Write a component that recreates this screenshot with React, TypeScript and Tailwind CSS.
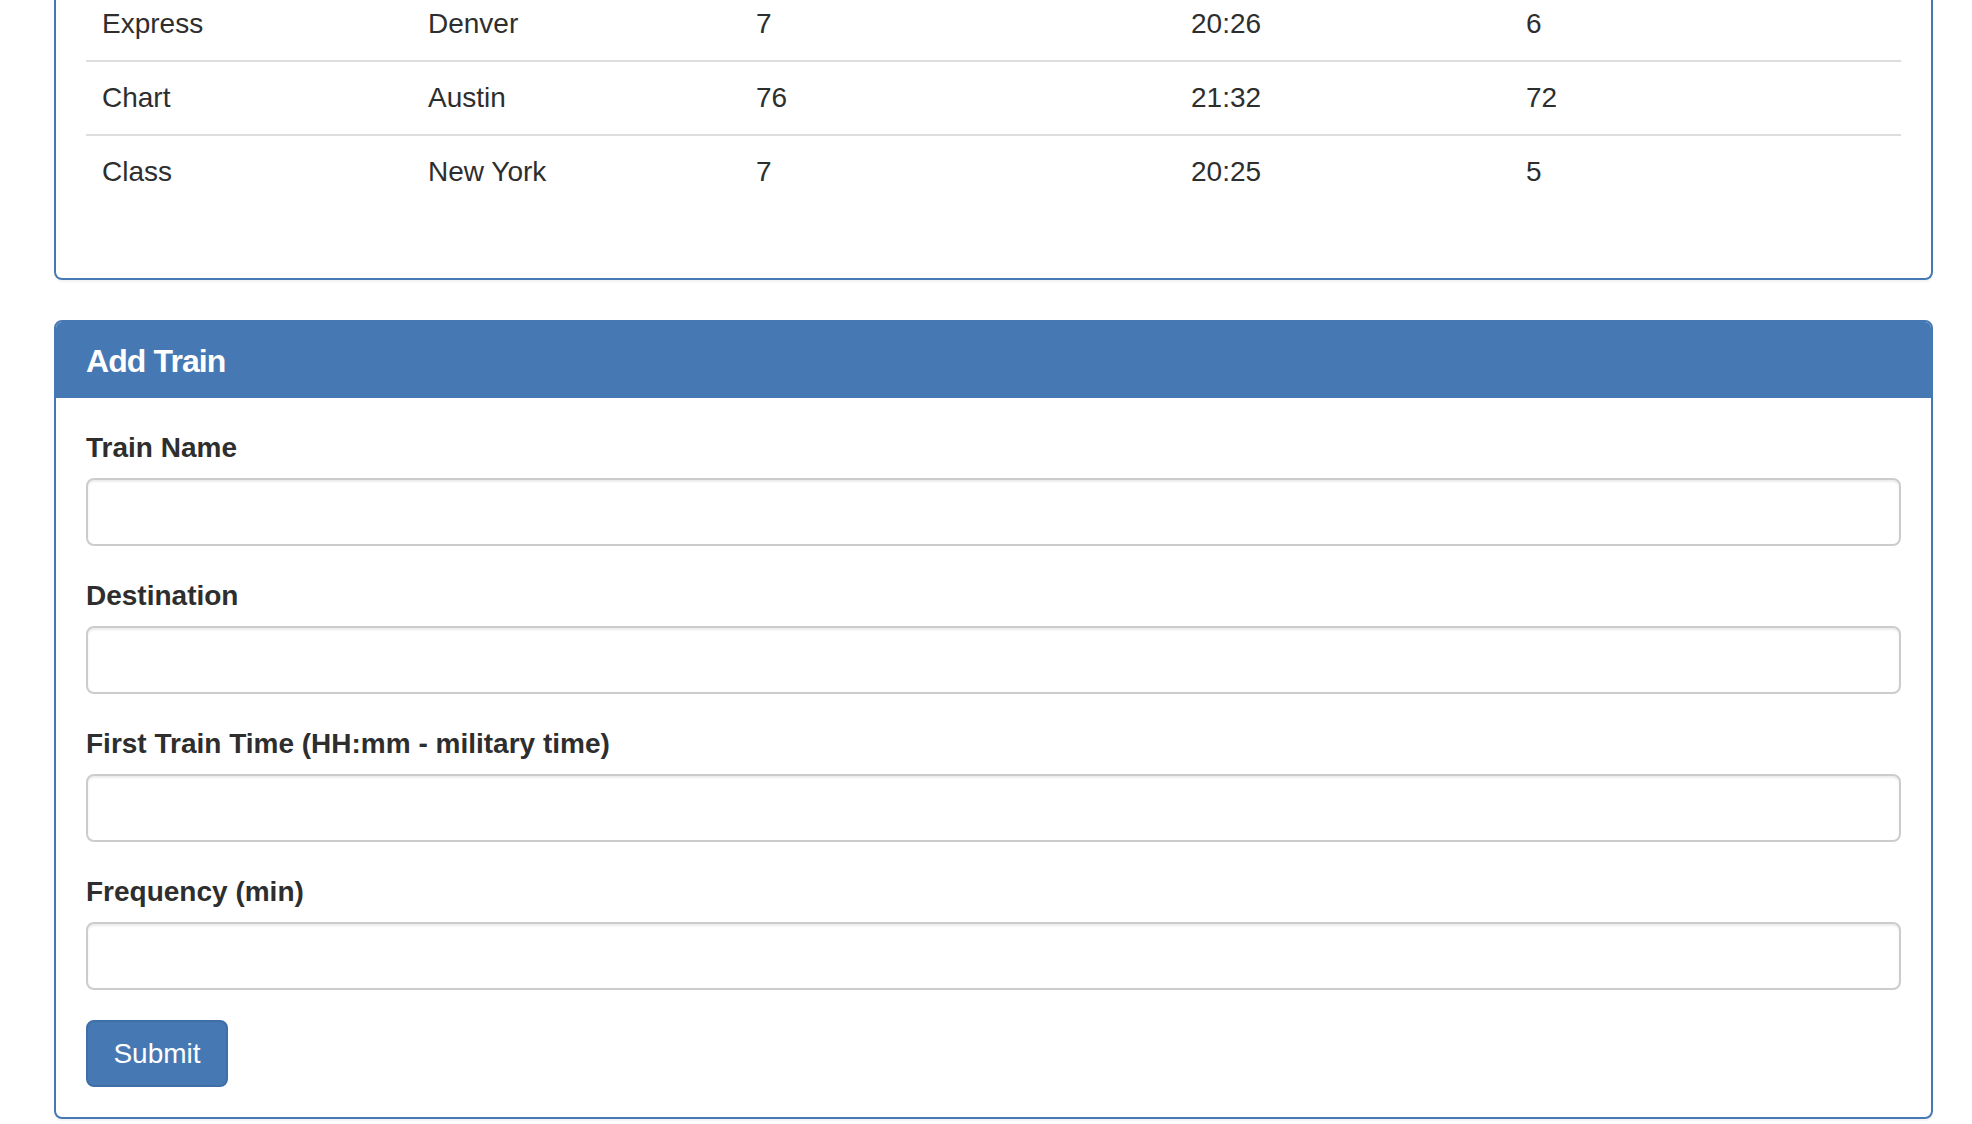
import React from 'react';

const rows = [
    { name: 'Express', dest: 'Denver', freq: '7', next: '20:26', away: '6' },
    { name: 'Chart', dest: 'Austin', freq: '76', next: '21:32', away: '72' },
    { name: 'Class', dest: 'New York', freq: '7', next: '20:25', away: '5' },
];

const fields = [
    'Train Name',
    'Destination',
    'First Train Time (HH:mm - military time)',
    'Frequency (min)',
];

const colWidths = ['w-[326px]', 'w-[328px]', 'w-[435px]', 'w-[335px]', 'w-[391px]'];

const App: React.FC = () => {
    return (
        <div className="min-h-screen bg-white pl-[54px] pr-[39px] font-['Liberation_Sans',Arial,sans-serif] text-[28px] leading-[40px] text-[#2e2e2e]">
            {/* schedule panel, top cut off by the page edge */}
            <div className="border-2 border-t-0 border-[#4679b3] rounded-b-[8px] px-[30px] pb-[70px] shadow-[0_2px_2px_rgba(0,0,0,0.05)]">
                <table className="w-full border-collapse">
                    <tbody>
                        {rows.map((r, i) => {
                            const cells = [r.name, r.dest, r.freq, r.next, r.away];
                            return (
                                <tr key={r.name}>
                                    {cells.map((c, j) => (
                                        <td
                                            key={j}
                                            className={`${colWidths[j]} px-[16px] pb-[16px] text-left align-top ${i === 0 ? 'pt-[4px]' : 'pt-[16px] border-t-2 border-[#ddd]'}`}
                                        >
                                            {c}
                                        </td>
                                    ))}
                                </tr>
                            );
                        })}
                    </tbody>
                </table>
            </div>

            <div className="mt-[40px] border-2 border-[#4679b3] rounded-[8px] overflow-hidden shadow-[0_2px_2px_rgba(0,0,0,0.05)]">
                <div className="bg-[#4679b3] px-[30px] pt-[22px] pb-[17px] border-b-2 border-[#4679b3]">
                    <h3 className="text-[32px] leading-[35px] font-bold tracking-[-0.9px] text-white">Add Train</h3>
                </div>
                <div className="p-[30px]">
                    <form onSubmit={(e) => e.preventDefault()}>
                        {fields.map((f) => (
                            <div key={f} className="mb-[30px]">
                                <label className="block mb-[10px] font-bold leading-[40px]">{f}</label>
                                <input
                                    type="text"
                                    className="block w-full h-[68px] px-[24px] bg-white border-2 border-[#ccc] rounded-[8px] shadow-[inset_0_2px_2px_rgba(0,0,0,0.075)] outline-none"
                                />
                            </div>
                        ))}
                        <button
                            type="submit"
                            className="h-[67px] w-[142px] bg-[#4679b3] border-2 border-[#3f6fa6] rounded-[8px] text-white text-[28px] leading-[40px]"
                        >
                            Submit
                        </button>
                    </form>
                </div>
            </div>
        </div>
    );
};

export default App;
